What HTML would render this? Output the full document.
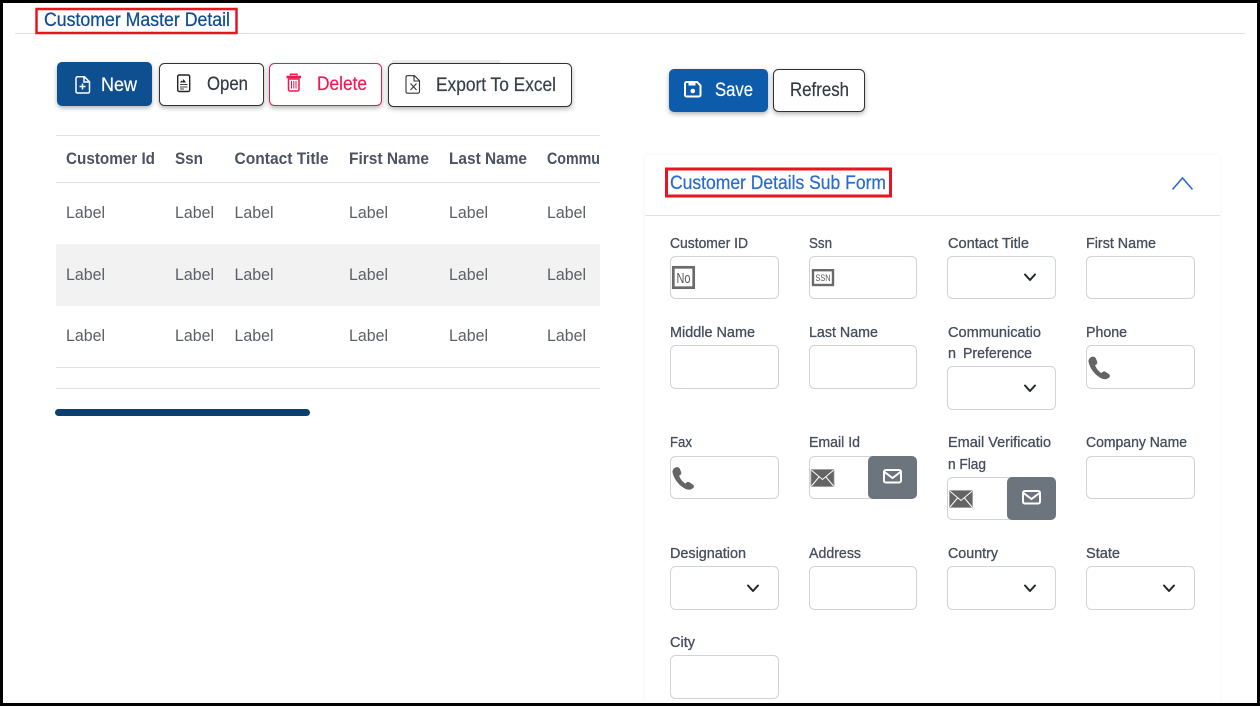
<!DOCTYPE html>
<html lang="en">
<head>
<meta charset="utf-8">
<title>Customer Master Detail</title>
<style>
html,body{margin:0;padding:0;background:#fff;width:1260px;height:706px;overflow:hidden}
svg{display:block;overflow:hidden}
text{font-family:"Liberation Sans",Arial,sans-serif}
.h{font-size:16.500px;font-weight:700;fill:#4a5361}
.c{font-size:16.500px;fill:#5c6066}
.l{font-size:14.500px;fill:#454e5c;stroke:#454e5c;stroke-width:.3px}
.b{font-size:19px;stroke-width:.2px}
.t{font-size:19px;stroke-width:.25px}
.i{fill:#fff;stroke:#ced4da;stroke-width:1}
.v{fill:none;stroke:#212529;stroke-width:2;stroke-linecap:round;stroke-linejoin:round}
</style>
</head>
<body>
<svg width="1260" height="706" viewBox="0 0 1260 706" xmlns="http://www.w3.org/2000/svg">
<defs>
<filter id="sh" x="-20%" y="-30%" width="140%" height="170%"><feDropShadow dx="0" dy="2" stdDeviation="2.500" flood-color="#000" flood-opacity=".3"/></filter>
<filter id="cs" x="-3%" y="-3%" width="106%" height="103%"><feDropShadow dx="0" dy="0" stdDeviation="1.500" flood-color="#000" flood-opacity=".06"/></filter>
<g id="phone"><path d="M3.500 0.800C1.400 1.800.4 3.600 1 6c1.600 6.500 6.500 12.500 12.500 15.600 2.600 1.200 5.300 1 7.200-.6 1.300-1.100 1.100-2.500-.1-3.300l-3-2c-1.100-.7-2.200-.6-3.100.2l-1.200 1.100C10.500 15.300 8 12 6.700 8.800l1.400-1c.9-.7 1.100-1.700.7-2.800L7.400 1.800C6.800.5 5.100 0 3.500.8z" fill="#646464" stroke="#646464" stroke-width=".6"/></g>
<g id="mail"><rect x="0" y="0" width="23" height="17" rx="1" fill="#646464" stroke="#9a9a9a" stroke-width=".8"/><path d="M.5.8 11.500 10 22.500.8M.5 16.500 8 7.500M22.500 16.500 15 7.500" fill="none" stroke="#fff" stroke-width="1"/></g>
<g id="mbtn"><rect x="1" y="1" width="17" height="12.500" rx="1.800" fill="none" stroke="#fff" stroke-width="2"/><path d="M1.500 3 9.500 9l8-6" fill="none" stroke="#fff" stroke-width="2"/></g>
</defs>

<rect width="1260" height="706" fill="#000"/>
<rect x="3" y="3" width="1254" height="700" fill="#fff"/>

<!-- page title -->
<rect x="15" y="33" width="1230" height="1" fill="#dfe1e4"/>
<rect x="36.500" y="9" width="200" height="24" fill="none" stroke="#e8141f" stroke-width="2.500"/>
<text class="t" x="44" y="26" fill="#0b4f92" stroke="#0b4f92" textLength="186" lengthAdjust="spacingAndGlyphs">Customer Master Detail</text>

<!-- toolbar left -->
<rect x="392" y="60" width="108" height="6" fill="#000" opacity=".07"/>
<rect x="57" y="62" width="95" height="44" rx="5" fill="#0b4f8f" filter="url(#sh)"/>
<path d="M78 76.800h6.500l5 5v9.700a1.500 1.500 0 0 1-1.500 1.500h-10.500a1.500 1.500 0 0 1-1.500-1.500v-13.200a1.500 1.500 0 0 1 1.500-1.500zM84 77v5h5" fill="none" stroke="#fff" stroke-width="1.500"/>
<path d="M82.500 83.500v6M79.500 86.500h6" stroke="#fff" stroke-width="1.500"/>
<text class="b" x="101" y="91" fill="#fff" stroke="#fff" textLength="36" lengthAdjust="spacingAndGlyphs">New</text>

<rect x="159.500" y="63.500" width="104" height="42" rx="5" fill="#fff" stroke="#333" filter="url(#sh)"/>
<rect x="177.700" y="75" width="12" height="16.500" rx="1.500" fill="none" stroke="#222" stroke-width="1.400"/>
<path d="M180 82.500l1.500-2 1 1 1-2.500 2.500 3.500z" fill="#222"/>
<path d="M180 84.500h7.500M180 87h7.500M180 89h4" stroke="#444" stroke-width="1"/>
<text class="b" x="207" y="90" fill="#333a44" stroke="#333a44" textLength="41" lengthAdjust="spacingAndGlyphs">Open</text>

<rect x="269.500" y="63.500" width="112" height="42" rx="5" fill="#fff" stroke="#f0194f" filter="url(#sh)"/>
<path d="M286.500 77h14.500" fill="none" stroke="#f0194f" stroke-width="2.500"/>
<path d="M290.500 75.500v-1.200h6.500v1.200" fill="none" stroke="#f0194f" stroke-width="1.500"/>
<path d="M288.500 79h10.500v10.500a1.500 1.500 0 0 1-1.500 1.500h-7.500a1.500 1.500 0 0 1-1.500-1.500z" fill="none" stroke="#f0194f" stroke-width="1.500"/>
<path d="M291.500 81v7.500M293.800 81v7.500M296 81v7.500" stroke="#f0194f" stroke-width="1"/>
<text class="b" x="317" y="90" fill="#f0194f" stroke="#f0194f" textLength="50" lengthAdjust="spacingAndGlyphs">Delete</text>

<rect x="388.500" y="63.500" width="183" height="43" rx="5" fill="#fff" stroke="#333" filter="url(#sh)"/>
<path d="M408 75.700h6.500l5 5v11a1.500 1.500 0 0 1-1.500 1.500h-10.500a1.500 1.500 0 0 1-1.500-1.500v-14.500a1.500 1.500 0 0 1 1.500-1.500zM414 76v5h5" fill="none" stroke="#333" stroke-width="1.100"/>
<path d="M410.500 83.500l6 6.500M416.500 83.500l-6 6.500" stroke="#333" stroke-width="1.100"/>
<text class="b" x="436" y="91" fill="#37404c" stroke="#37404c" textLength="120" lengthAdjust="spacingAndGlyphs">Export To Excel</text>

<!-- table -->
<rect x="56" y="244" width="544" height="62" fill="#f2f2f2"/>
<g fill="#dfe1e6">
<rect x="56" y="135" width="544" height="1"/>
<rect x="56" y="182" width="544" height="1"/>
<rect x="56" y="367" width="544" height="1"/>
<rect x="56" y="388" width="544" height="1"/>
</g>
<text class="h" x="66" y="164" textLength="89" lengthAdjust="spacingAndGlyphs">Customer Id</text>
<text class="h" x="175" y="164" textLength="28" lengthAdjust="spacingAndGlyphs">Ssn</text>
<text class="h" x="234.500" y="164" textLength="94" lengthAdjust="spacingAndGlyphs">Contact Title</text>
<text class="h" x="349" y="164" textLength="80" lengthAdjust="spacingAndGlyphs">First Name</text>
<text class="h" x="449" y="164" textLength="78" lengthAdjust="spacingAndGlyphs">Last Name</text>
<text class="h" x="547" y="164" textLength="53" lengthAdjust="spacingAndGlyphs">Commu</text>

<text class="c" x="66" y="218" textLength="39" lengthAdjust="spacingAndGlyphs">Label</text>
<text class="c" x="175" y="218" textLength="39" lengthAdjust="spacingAndGlyphs">Label</text>
<text class="c" x="234.500" y="218" textLength="39" lengthAdjust="spacingAndGlyphs">Label</text>
<text class="c" x="349" y="218" textLength="39" lengthAdjust="spacingAndGlyphs">Label</text>
<text class="c" x="449" y="218" textLength="39" lengthAdjust="spacingAndGlyphs">Label</text>
<text class="c" x="547" y="218" textLength="39" lengthAdjust="spacingAndGlyphs">Label</text>

<text class="c" x="66" y="280" textLength="39" lengthAdjust="spacingAndGlyphs">Label</text>
<text class="c" x="175" y="280" textLength="39" lengthAdjust="spacingAndGlyphs">Label</text>
<text class="c" x="234.500" y="280" textLength="39" lengthAdjust="spacingAndGlyphs">Label</text>
<text class="c" x="349" y="280" textLength="39" lengthAdjust="spacingAndGlyphs">Label</text>
<text class="c" x="449" y="280" textLength="39" lengthAdjust="spacingAndGlyphs">Label</text>
<text class="c" x="547" y="280" textLength="39" lengthAdjust="spacingAndGlyphs">Label</text>

<text class="c" x="66" y="341" textLength="39" lengthAdjust="spacingAndGlyphs">Label</text>
<text class="c" x="175" y="341" textLength="39" lengthAdjust="spacingAndGlyphs">Label</text>
<text class="c" x="234.500" y="341" textLength="39" lengthAdjust="spacingAndGlyphs">Label</text>
<text class="c" x="349" y="341" textLength="39" lengthAdjust="spacingAndGlyphs">Label</text>
<text class="c" x="449" y="341" textLength="39" lengthAdjust="spacingAndGlyphs">Label</text>
<text class="c" x="547" y="341" textLength="39" lengthAdjust="spacingAndGlyphs">Label</text>

<rect x="55" y="409" width="255" height="7" rx="3.500" fill="#0a3f72"/>

<!-- toolbar right -->
<rect x="669" y="69" width="99" height="43" rx="5" fill="#0b5cab" filter="url(#sh)"/>
<path d="M686.500 82h10.500l3.500 3.500v9.500a1.500 1.500 0 0 1-1.500 1.500h-12.500a1.500 1.500 0 0 1-1.500-1.500v-11.500a1.500 1.500 0 0 1 1.500-1.500z" fill="none" stroke="#fff" stroke-width="2"/>
<rect x="688.500" y="82" width="7" height="3.500" fill="#fff"/>
<circle cx="692.800" cy="91" r="2.300" fill="#fff"/>
<text class="b" x="715" y="96" fill="#fff" stroke="#fff" textLength="38" lengthAdjust="spacingAndGlyphs">Save</text>

<rect x="773.500" y="69.500" width="91" height="42" rx="5" fill="#fff" stroke="#333" filter="url(#sh)"/>
<text class="b" x="790" y="96" fill="#333a44" stroke="#333a44" textLength="59" lengthAdjust="spacingAndGlyphs">Refresh</text>

<!-- card -->
<rect x="645" y="155" width="575" height="548" rx="3" fill="#fff" filter="url(#cs)"/>
<rect x="645" y="215" width="575" height="1" fill="#dfe2e6"/>
<rect x="666.500" y="169" width="224" height="27" fill="none" stroke="#e8141f" stroke-width="3"/>
<text class="t" x="670" y="189" fill="#2b6ccb" stroke="#2b6ccb" textLength="216" lengthAdjust="spacingAndGlyphs">Customer Details Sub Form</text>
<path d="M1172.500 189.500 1182.500 178l10 11.500" fill="none" stroke="#2b6ccb" stroke-width="1.600"/>

<!-- row 1 -->
<text class="l" x="670" y="248" textLength="78" lengthAdjust="spacingAndGlyphs">Customer ID</text>
<text class="l" x="809" y="248" textLength="23" lengthAdjust="spacingAndGlyphs">Ssn</text>
<text class="l" x="948" y="248" textLength="81" lengthAdjust="spacingAndGlyphs">Contact Title</text>
<text class="l" x="1086" y="248" textLength="70" lengthAdjust="spacingAndGlyphs">First Name</text>
<rect class="i" x="670.500" y="256.500" width="108" height="42" rx="5"/>
<rect class="i" x="809.500" y="256.500" width="107" height="42" rx="5"/>
<rect class="i" x="947.500" y="256.500" width="108" height="42" rx="5"/>
<rect class="i" x="1086.500" y="256.500" width="108" height="42" rx="5"/>
<rect x="673.300" y="267.300" width="20.400" height="20.400" fill="#fff" stroke="#6a6a6a" stroke-width="2.700"/>
<text x="676.500" y="283" font-size="14.500" fill="#555" textLength="14" lengthAdjust="spacingAndGlyphs">No</text>
<rect x="813" y="270.200" width="20" height="14.800" fill="#fff" stroke="#6a6a6a" stroke-width="2.400"/>
<text x="815.500" y="281" font-size="9" fill="#555" textLength="15" lengthAdjust="spacingAndGlyphs">SSN</text>
<path class="v" d="M1025 274.500l5 5.500 5-5.500"/>

<!-- row 2 -->
<text class="l" x="670" y="337" textLength="85" lengthAdjust="spacingAndGlyphs">Middle Name</text>
<text class="l" x="809" y="337" textLength="69" lengthAdjust="spacingAndGlyphs">Last Name</text>
<text class="l" x="948" y="337" textLength="93" lengthAdjust="spacingAndGlyphs">Communicatio</text>
<text class="l" x="948" y="358" textLength="8" lengthAdjust="spacingAndGlyphs">n</text>
<text class="l" x="963" y="358" textLength="69" lengthAdjust="spacingAndGlyphs">Preference</text>
<text class="l" x="1086" y="337" textLength="41" lengthAdjust="spacingAndGlyphs">Phone</text>
<rect class="i" x="670.500" y="345.500" width="108" height="43" rx="5"/>
<rect class="i" x="809.500" y="345.500" width="107" height="43" rx="5"/>
<rect class="i" x="947.500" y="366.500" width="108" height="43" rx="5"/>
<rect class="i" x="1086.500" y="345.500" width="108" height="43" rx="5"/>
<use href="#phone" x="1088" y="356.500"/>
<path class="v" d="M1025 385.500l5 5.500 5-5.500"/>

<!-- row 3 -->
<text class="l" x="670" y="447" textLength="22" lengthAdjust="spacingAndGlyphs">Fax</text>
<text class="l" x="809" y="447" textLength="51" lengthAdjust="spacingAndGlyphs">Email Id</text>
<text class="l" x="948" y="447" textLength="103" lengthAdjust="spacingAndGlyphs">Email Verificatio</text>
<text class="l" x="948" y="469" textLength="38" lengthAdjust="spacingAndGlyphs">n Flag</text>
<text class="l" x="1086" y="447" textLength="101" lengthAdjust="spacingAndGlyphs">Company Name</text>
<rect class="i" x="670.500" y="456.500" width="108" height="42" rx="5"/>
<use href="#phone" x="672" y="467"/>
<rect class="i" x="809.500" y="456.500" width="70" height="42" rx="5"/>
<use href="#mail" x="811" y="469.500"/>
<rect x="868" y="456" width="49" height="43" rx="5" fill="#6c757d"/>
<use href="#mbtn" x="883" y="469"/>
<rect class="i" x="947.500" y="477.500" width="70" height="42" rx="5"/>
<use href="#mail" x="949.500" y="490.500"/>
<rect x="1007" y="477" width="49" height="43" rx="5" fill="#6c757d"/>
<use href="#mbtn" x="1022" y="490"/>
<rect class="i" x="1086.500" y="456.500" width="108" height="42" rx="5"/>

<!-- row 4 -->
<text class="l" x="670" y="558" textLength="76" lengthAdjust="spacingAndGlyphs">Designation</text>
<text class="l" x="809" y="558" textLength="52" lengthAdjust="spacingAndGlyphs">Address</text>
<text class="l" x="948" y="558" textLength="50" lengthAdjust="spacingAndGlyphs">Country</text>
<text class="l" x="1086" y="558" textLength="34" lengthAdjust="spacingAndGlyphs">State</text>
<rect class="i" x="670.500" y="566.500" width="108" height="43" rx="5"/>
<rect class="i" x="809.500" y="566.500" width="107" height="43" rx="5"/>
<rect class="i" x="947.500" y="566.500" width="108" height="43" rx="5"/>
<rect class="i" x="1086.500" y="566.500" width="108" height="43" rx="5"/>
<path class="v" d="M748 585.500l5 5.500 5-5.500"/>
<path class="v" d="M1025 585.500l5 5.500 5-5.500"/>
<path class="v" d="M1164 585.500l5 5.500 5-5.500"/>

<!-- row 5 -->
<text class="l" x="670" y="647" textLength="25" lengthAdjust="spacingAndGlyphs">City</text>
<rect class="i" x="670.500" y="655.500" width="108" height="43" rx="5"/>

<!-- frame on top -->
<rect x="0" y="703" width="1260" height="3" fill="#000"/>
<rect x="1257" y="0" width="3" height="706" fill="#000"/>
</svg>
</body>
</html>
